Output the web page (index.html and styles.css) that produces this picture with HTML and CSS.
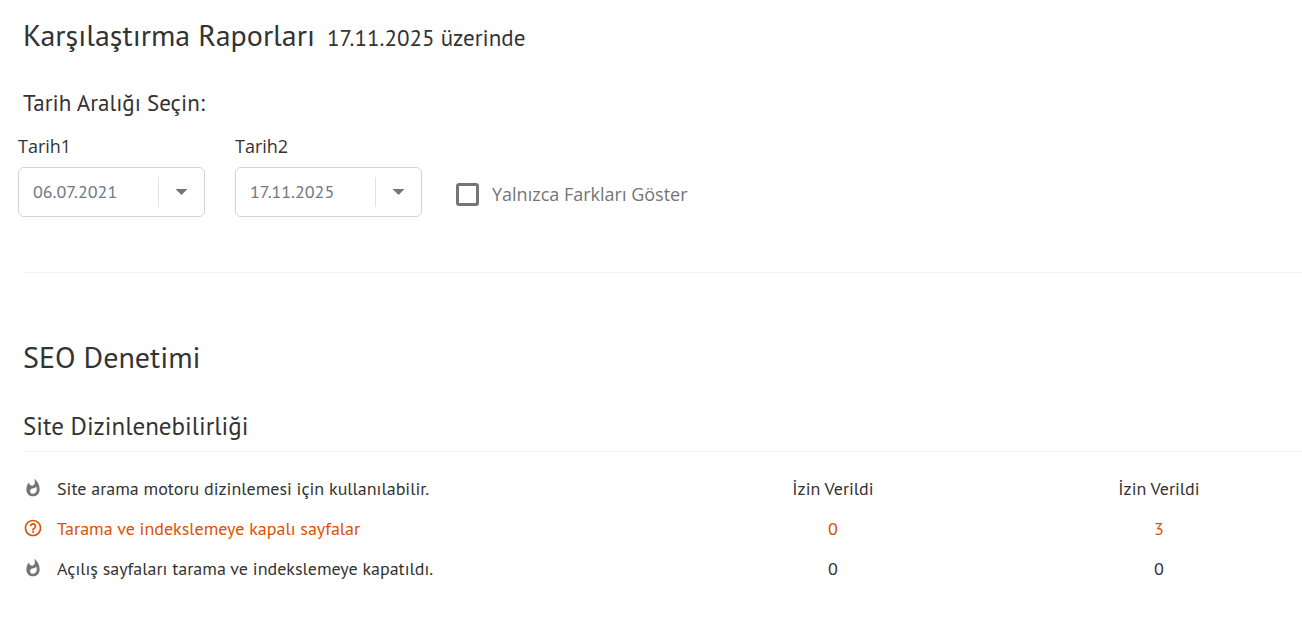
FILE: index.html
```html
<!DOCTYPE html>
<html lang="tr">
<head>
<meta charset="utf-8">
<title>Karşılaştırma Raporları</title>
<link rel="stylesheet" href="styles.css">
</head>
<body>
<svg class="sprite" aria-hidden="true">
  <symbol id="flame" viewBox="0 0 24 24"><path d="M13.5.67s.74 2.65.74 4.8c0 2.06-1.35 3.73-3.41 3.73-2.07 0-3.63-1.67-3.63-3.73l.03-.36C5.21 7.51 4 10.62 4 14c0 4.42 3.58 8 8 8s8-3.58 8-8C20 8.61 17.41 3.8 13.5.67zM11.71 19c-1.78 0-3.22-1.4-3.22-3.14 0-1.62 1.05-2.76 2.81-3.12 1.77-.36 3.6-1.21 4.62-2.58.39 1.29.59 2.65.59 4.04 0 2.65-2.15 4.8-4.8 4.8z"/></symbol>
  <symbol id="help" viewBox="0 0 24 24"><path d="M11 18h2v-2h-2v2zm1-16C6.48 2 2 6.48 2 12s4.48 10 10 10 10-4.48 10-10S17.520 2 12 2zm0 18c-4.410 0-8-3.590-8-8s3.590-8 8-8 8 3.590 8 8-3.590 8-8 8zm0-14c-2.210 0-4 1.790-4 4h2c0-1.100.9-2 2-2s2 .9 2 2c0 2-3 1.750-3 5h2c0-2.250 3-2.500 3-5 0-2.210-1.790-4-4-4z"/></symbol>
</svg>
<main class="report">
  <header class="report-header">
    <h1 class="title">Karşılaştırma Raporları</h1>
    <span class="title-date">17.11.2025 üzerinde</span>
  </header>
  <h2 class="range-title">Tarih Aralığı Seçin:</h2>
  <form class="filters">
    <div class="field">
      <label class="field-label" for="date1">Tarih1</label>
      <div class="select-box">
        <select class="select" id="date1"><option>06.07.2021</option></select>
        <span class="select-arrow"><svg class="caret" viewBox="0 0 12 6"><path d="M0 0h12L6 6z"/></svg></span>
      </div>
    </div>
    <div class="field">
      <label class="field-label" for="date2">Tarih2</label>
      <div class="select-box">
        <select class="select" id="date2"><option>17.11.2025</option></select>
        <span class="select-arrow"><svg class="caret" viewBox="0 0 12 6"><path d="M0 0h12L6 6z"/></svg></span>
      </div>
    </div>
    <label class="check"><input class="check-box" type="checkbox">Yalnızca Farkları Göster</label>
  </form>
  <section class="audit">
    <h2 class="audit-title">SEO Denetimi</h2>
    <h3 class="group-title">Site Dizinlenebilirliği</h3>
    <table class="results">
      <tbody>
        <tr class="row">
          <td class="name"><span class="name-line"><svg class="icon"><use href="#flame"/></svg>Site arama motoru dizinlemesi için kullanılabilir.</span></td>
          <td class="value">İzin Verildi</td>
          <td class="value">İzin Verildi</td>
        </tr>
        <tr class="row changed">
          <td class="name"><span class="name-line"><svg class="icon"><use href="#help"/></svg>Tarama ve indekslemeye kapalı sayfalar</span></td>
          <td class="value">0</td>
          <td class="value">3</td>
        </tr>
        <tr class="row">
          <td class="name"><span class="name-line"><svg class="icon"><use href="#flame"/></svg>Açılış sayfaları tarama ve indekslemeye kapatıldı.</span></td>
          <td class="value">0</td>
          <td class="value">0</td>
        </tr>
      </tbody>
    </table>
  </section>
</main>
</body>
</html>
```
FILE: styles.css
```css
* { box-sizing: border-box; }
body {
  margin: 0;
  overflow-x: hidden;
  background: #fff;
  color: #333;
  font-family: "PT Sans", "Noto Sans", sans-serif;
  font-size: 18px;
}
.sprite { position: absolute; width: 0; height: 0; }
h1, h2, h3 { margin: 0; font-weight: 400; }
.report-header {
  display: flex;
  align-items: baseline;
  gap: 12px;
  padding: 15px 23px 0;
}
.title { font-size: 30px; line-height: 40px; }
.title-date { font-size: 23px; line-height: 32px; }
.range-title {
  padding: 32px 23px 0;
  font-size: 23px;
  line-height: 32px;
}
.filters {
  display: flex;
  align-items: flex-end;
  gap: 30px;
  padding: 15px 18px 55px;
}
.field { width: 187px; }
.field-label {
  display: block;
  padding-bottom: 9px;
  font: 18px/24px "Open Sans", sans-serif;
}
.select-box {
  display: flex;
  align-items: center;
  height: 50px;
  border: 1px solid #d3d1e0;
  border-radius: 6px;
}
.select {
  flex: 1;
  min-width: 0;
  height: 48px;
  padding: 0 0 2px 14px;
  border: 0;
  background: none;
  color: #717885;
  font: 18px "PT Sans", "Noto Sans", sans-serif;
  appearance: none;
}
.select-arrow {
  display: flex;
  align-items: center;
  justify-content: center;
  width: 46px;
  height: 30px;
  border-left: 1px solid #e2e0ea;
}
.caret { width: 13px; height: 6px; fill: #757575; }
.check {
  display: flex;
  align-items: center;
  gap: 13px;
  padding: 0 0 9px 4px;
  color: #757575;
  font: 18px/28px "Open Sans", sans-serif;
}
.check-box {
  width: 23px;
  height: 23px;
  margin: 0;
  border: 3px solid #757575;
  border-radius: 3px;
  background: #fff;
  appearance: none;
}
.audit {
  margin-left: 23px;
  padding-top: 64px;
  border-top: 1px solid #f3f3f3;
}
.audit-title { font-size: 30px; line-height: 40px; }
.group-title {
  padding: 31px 0 7px;
  border-bottom: 1px solid #f3f3f0;
  font-size: 25px;
  line-height: 36px;
}
.results {
  width: calc(100% + 25px);
  margin: 16px 0 0 -5px;
  border-collapse: collapse;
  table-layout: fixed;
}
.row { height: 40px; }
.row td { padding: 0; }
.name { width: 50%; }
.name-line {
  display: flex;
  align-items: center;
  gap: 14px;
  padding-left: 5px;
}
.icon { width: 20px; height: 20px; fill: #757575; }
.value { width: 25%; text-align: center; }
.changed { color: #dc5000; }
.changed .icon { fill: #dc5000; }
```
